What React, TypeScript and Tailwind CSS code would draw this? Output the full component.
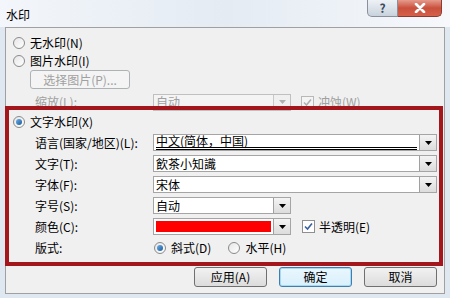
import React from 'react';

const font = "font-['SimSun','Noto_Sans_CJK_SC',sans-serif]";

const Radio = ({ checked = false }: { checked?: boolean }) => (
  <span className="relative inline-flex h-[12px] w-[12px] items-center justify-center rounded-full border border-[#8a8a8a] bg-gradient-to-br from-[#e6e6e6] to-[#ffffff]">
    {checked && (
      <span className="h-[6px] w-[6px] rounded-full bg-gradient-to-br from-[#6cb0e8] to-[#1a5a9a]" />
    )}
  </span>
);

const Checkbox = ({ disabled = false }: { disabled?: boolean }) => (
  <span
    className={`inline-flex h-[13px] w-[13px] items-center justify-center border ${
      disabled ? 'border-[#b8b8b8] bg-[#f4f4f4]' : 'border-[#8e8f8f] bg-white'
    }`}
  >
    <svg width="9" height="9" viewBox="0 0 9 9">
      <path
        d="M1 4.5 L3.5 7 L8 1.5"
        fill="none"
        stroke={disabled ? '#b0b0b0' : '#3a5fa0'}
        strokeWidth="1.6"
      />
    </svg>
  </span>
);

const Arrow = ({ disabled = false }: { disabled?: boolean }) => (
  <span
    className={`flex h-full w-[17px] shrink-0 items-center justify-center border-l ${
      disabled ? 'border-[#c8c8c8] bg-[#f0f0f0]' : 'border-[#a0a0a0] bg-gradient-to-b from-[#f4f4f4] to-[#dcdcdc]'
    }`}
  >
    <svg width="7" height="4" viewBox="0 0 7 4">
      <path d="M0 0 H7 L3.5 4 Z" fill={disabled ? '#b0b0b0' : '#000'} />
    </svg>
  </span>
);

const Select = ({
  value,
  width,
  disabled = false,
  selected = false,
  children,
}: {
  value?: string;
  width: string;
  disabled?: boolean;
  selected?: boolean;
  children?: React.ReactNode;
}) => (
  <div
    className={`flex h-[17px] ${width} items-stretch border ${
      disabled ? 'border-[#c0c0c0] bg-[#f4f4f4] text-[#a0a0a0]' : 'border-[#a5a5a5] bg-white text-black'
    }`}
  >
    <div className="flex flex-1 items-center px-[2px]">
      {children ?? (
        <span
          className={`whitespace-nowrap leading-[12px] ${
            selected ? 'w-full border-b-[3px] border-double border-black' : ''
          }`}
        >
          {value}
        </span>
      )}
    </div>
    <Arrow disabled={disabled} />
  </div>
);

const FieldRow = ({ label, children }: { label: string; children: React.ReactNode }) => (
  <div className="flex h-[17px] items-center">
    <span className="w-[124px] shrink-0 pl-[22px] whitespace-nowrap">{label}</span>
    {children}
  </div>
);

const Button = ({ label, focused = false }: { label: string; focused?: boolean }) => (
  <div
    className={`flex h-[20px] w-[73px] items-center justify-center rounded-[3px] border ${
      focused
        ? 'border-[#3c7fb1] bg-gradient-to-b from-[#eaf6fd] to-[#d9f0fc] shadow-[inset_0_0_0_1px_#a7d9f5]'
        : 'border-[#707070] bg-gradient-to-b from-[#f2f2f2] to-[#dcdcdc]'
    }`}
  >
    {label}
  </div>
);

export default function App() {
  return (
    <div className={`relative h-[298px] w-[450px] overflow-hidden bg-[#dfe7f0] text-[12px] text-black ${font}`}>
      {/* title bar */}
      <div className="flex h-[27px] items-start bg-gradient-to-r from-[#f3f6fa] via-[#e4ebf3] to-[#f6f8fb]">
        <span className="pl-[6px] pt-[6px] text-[12px] font-['Noto_Sans_CJK_SC',sans-serif]">水印</span>
        <div className="ml-auto mr-[8px] flex h-[17px]">
          <div className="flex w-[31px] items-center justify-center rounded-bl-[5px] border border-t-0 border-[#8a8f99] bg-gradient-to-b from-[#eef2f6] to-[#c9d2dc] text-[12px] font-bold text-[#3b4a5c]">
            ?
          </div>
          <div className="flex w-[44px] items-center justify-center rounded-br-[5px] border border-l-0 border-t-0 border-[#8a3a30] bg-gradient-to-b from-[#e69a8c] via-[#c9503c] to-[#d6604a]">
            <svg width="12" height="10" viewBox="0 0 12 10">
              <path d="M2 1 L10 9 M10 1 L2 9" stroke="#fff" strokeWidth="2.6" strokeLinecap="round" />
            </svg>
          </div>
        </div>
      </div>

      {/* dialog body */}
      <div className="mx-[5px] h-[267px] border border-[#a0a0a0] bg-[#f0f0f0] pl-[7px] pr-[6px]">
        <div className="flex flex-col">
          <div className="mt-[6px] flex h-[17px] items-center gap-[5px]">
            <Radio />
            <span>无水印(N)</span>
          </div>
          <div className="mt-[1px] flex h-[17px] items-center gap-[5px]">
            <Radio />
            <span>图片水印(I)</span>
          </div>
          <div className="ml-[17px] mt-[1px] flex h-[19px] w-[100px] items-center justify-center rounded-[3px] border border-[#adb2b5] bg-[#f4f4f4] text-[#a0a0a0]">
            选择图片(P)...
          </div>
          <div className="mt-[4px] flex h-[18px] items-center text-[#a0a0a0]">
            <span className="w-[140px] shrink-0 pl-[22px]">缩放(L):</span>
            <Select value="自动" width="w-[138px]" disabled />
            <span className="ml-[10px] flex items-center gap-[4px]">
              <Checkbox disabled />
              <span>冲蚀(W)</span>
            </span>
          </div>

          <div className="mt-[2px] flex h-[17px] items-center gap-[5px]">
            <Radio checked />
            <span>文字水印(X)</span>
          </div>

          <div className="mt-[4px] flex flex-col gap-[4px]">
            <FieldRow label="语言(国家/地区)(L):">
              <div className="ml-[16px]">
                <Select value="中文(简体，中国)" width="w-[284px]" selected />
              </div>
            </FieldRow>
            <FieldRow label="文字(T):">
              <div className="ml-[16px]">
                <Select value="飲茶小知識" width="w-[284px]" />
              </div>
            </FieldRow>
            <FieldRow label="字体(F):">
              <div className="ml-[16px]">
                <Select value="宋体" width="w-[284px]" />
              </div>
            </FieldRow>
            <FieldRow label="字号(S):">
              <div className="ml-[16px]">
                <Select value="自动" width="w-[138px]" />
              </div>
            </FieldRow>
            <FieldRow label="颜色(C):">
              <div className="ml-[16px]">
                <Select width="w-[138px]">
                  <div className="h-[11px] w-full bg-[#ff0000]" />
                </Select>
              </div>
              <span className="ml-[11px] flex items-center gap-[4px]">
                <Checkbox />
                <span>半透明(E)</span>
              </span>
            </FieldRow>
            <FieldRow label="版式:">
              <span className="ml-[17px] flex items-center gap-[5px]">
                <Radio checked />
                <span>斜式(D)</span>
              </span>
              <span className="ml-[17px] flex items-center gap-[5px]">
                <Radio />
                <span>水平(H)</span>
              </span>
            </FieldRow>
          </div>

          <div className="mt-[11px] flex justify-end gap-[12px] pr-[1px]">
            <Button label="应用(A)" />
            <Button label="确定" focused />
            <Button label="取消" />
          </div>
        </div>
      </div>

      {/* red annotation box */}
      <div className="pointer-events-none absolute left-[5px] top-[106px] h-[160px] w-[438px] border-[4px] border-[#a3161c]" />
    </div>
  );
}
